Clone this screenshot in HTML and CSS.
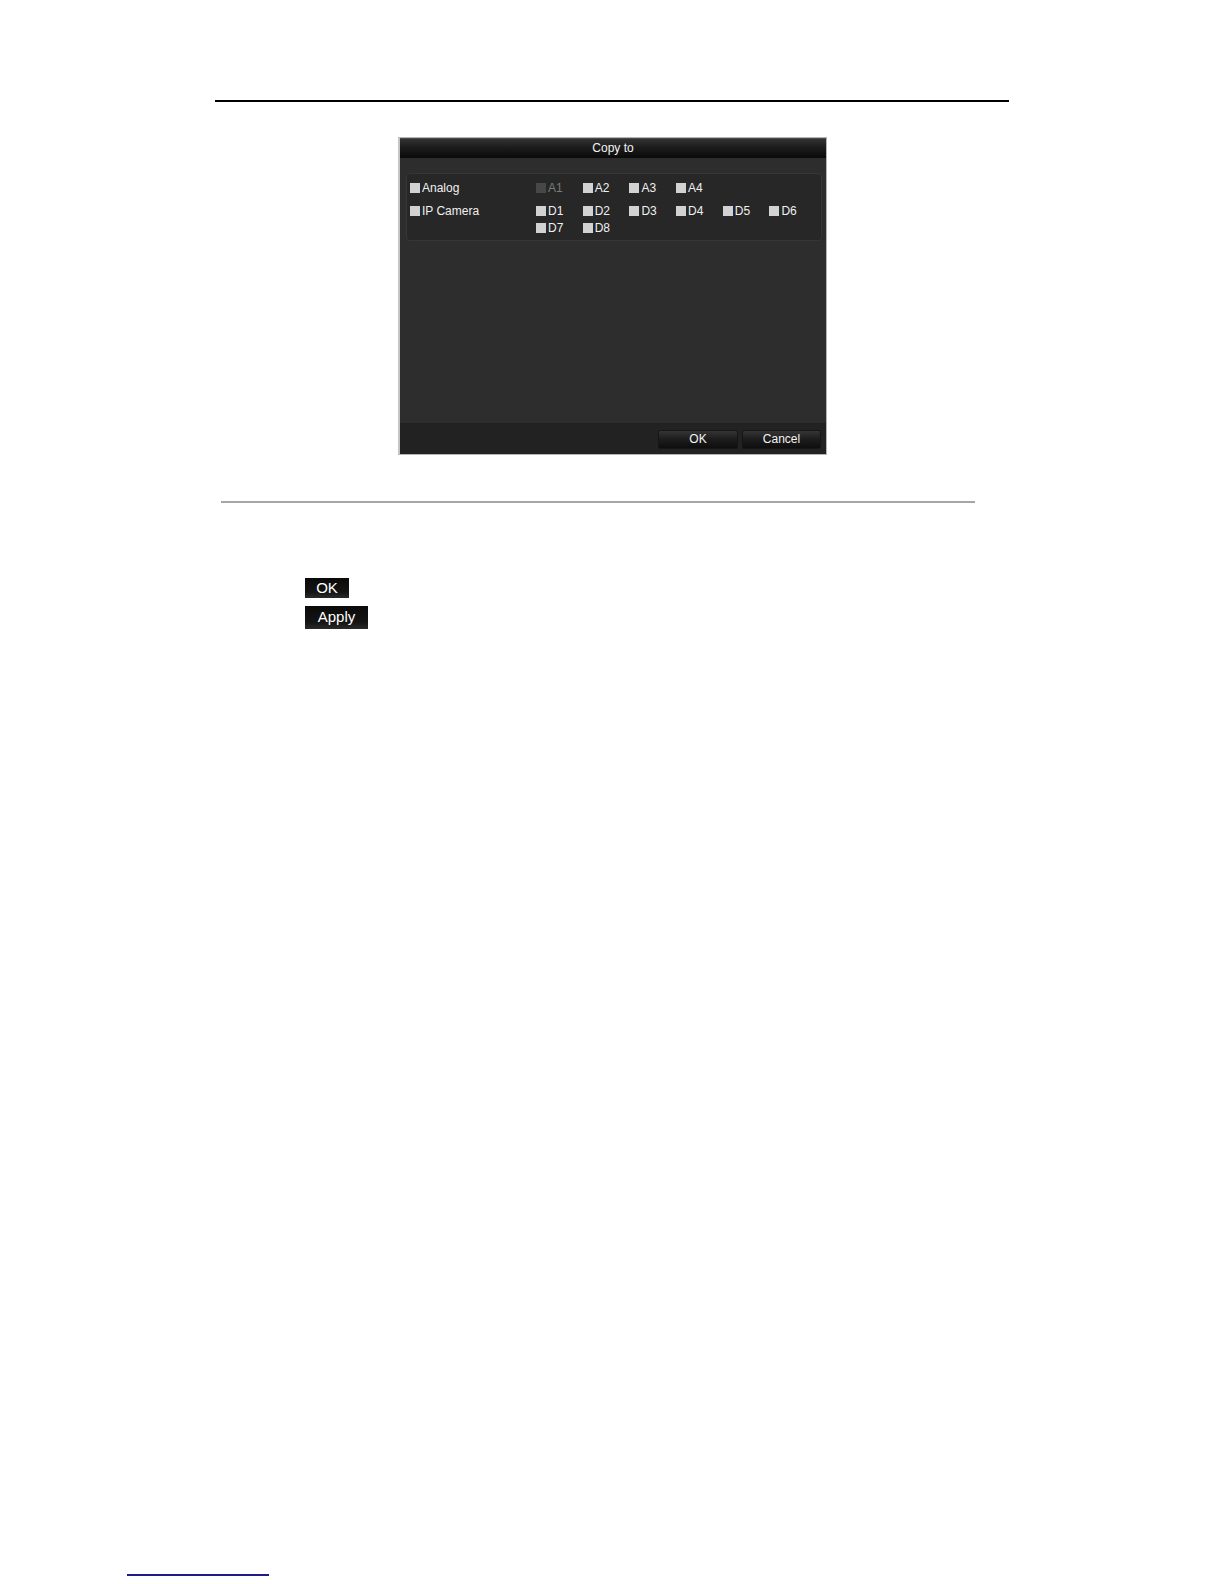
FILE: index.html
```html
<!DOCTYPE html>
<html>
<head>
<meta charset="utf-8">
<title>Copy to</title>
<link rel="stylesheet" href="styles.css">
</head>
<body>
<div class="page">
  <div class="top-rule"></div>

  <div class="dialog">
    <div class="dlg-title">Copy to</div>
    <div class="dlg-body">
      <div class="panel">
        <div class="prow first">
          <label class="cb main"><span class="box"></span>Analog</label>
          <div class="items">
            <label class="cb disabled"><span class="box"></span>A1</label>
            <label class="cb"><span class="box"></span>A2</label>
            <label class="cb"><span class="box"></span>A3</label>
            <label class="cb"><span class="box"></span>A4</label>
          </div>
        </div>
        <div class="prow">
          <label class="cb main"><span class="box"></span>IP Camera</label>
          <div class="items">
            <label class="cb"><span class="box"></span>D1</label>
            <label class="cb"><span class="box"></span>D2</label>
            <label class="cb"><span class="box"></span>D3</label>
            <label class="cb"><span class="box"></span>D4</label>
            <label class="cb"><span class="box"></span>D5</label>
            <label class="cb"><span class="box"></span>D6</label>
            <label class="cb"><span class="box"></span>D7</label>
            <label class="cb"><span class="box"></span>D8</label>
          </div>
        </div>
      </div>
    </div>
    <div class="dlg-footer">
      <button class="dbtn">OK</button>
      <button class="dbtn">Cancel</button>
    </div>
  </div>

  <div class="mid-rule"></div>

  <div class="legend">
    <div class="chip ok">OK</div>
    <div class="chip apply">Apply</div>
  </div>

  <div class="foot-link"></div>
</div>
</body>
</html>
```

FILE: styles.css
```css
html, body {
  margin: 0;
  padding: 0;
  background: #ffffff;
  overflow: hidden;
}

body {
  font-family: "Liberation Sans", Arial, sans-serif;
}

.page {
  width: 1224px;
  display: flex;
  flex-direction: column;
}

.top-rule {
  margin: 100px 0 0 215px;
  width: 794px;
  height: 2px;
  background: #000;
}

.dialog {
  margin: 35px 0 0 398px;
  width: 426px;
  height: 316px;
  border: 1px solid #b4b4b4;
  border-left: 2px solid #c4c4c4;
  background: #2c2c2c;
  display: flex;
  flex-direction: column;
}

.dlg-title {
  height: 19px;
  line-height: 19px;
  text-align: center;
  color: #f4f4f4;
  font-size: 12px;
  background: linear-gradient(#323232 0%, #1c1c1c 45%, #0a0a0a 100%);
  border-top: 1px solid #4a4a4a;
}

.dlg-body {
  flex: 1;
  padding: 15px 4px 0 6px;
  background: #2d2d2d;
}

.panel {
  height: 68px;
  box-sizing: border-box;
  background: #272727;
  border: 1px solid #363636;
  border-radius: 4px;
  padding: 7px 0 0 3px;
}

.prow {
  display: flex;
  align-items: flex-start;
}

.prow.first {
  margin-bottom: 9px;
}

.cb {
  display: flex;
  align-items: center;
  height: 14px;
  font-size: 12px;
  color: #f0f0f0;
  white-space: nowrap;
}

.cb .box {
  width: 10px;
  height: 10px;
  background: #d2d2d2;
  margin-right: 2px;
  flex: none;
}

.cb.main {
  width: 126px;
  flex: none;
}

.cb.disabled {
  color: #7a7a7a;
}

.cb.disabled .box {
  background: #474747;
}

.items {
  display: grid;
  grid-template-columns: repeat(6, 46.7px);
  row-gap: 3px;
}

.dlg-footer {
  height: 31px;
  background: #222222;
  display: flex;
  justify-content: flex-end;
  align-items: center;
  gap: 4px;
  padding-right: 5px;
}

.dbtn {
  height: 19px;
  padding: 0;
  border: 1px solid #161616;
  border-radius: 2px;
  background: linear-gradient(#353535 0%, #1c1c1c 50%, #0e0e0e 100%);
  color: #f4f4f4;
  font-family: "Liberation Sans", Arial, sans-serif;
  font-size: 12px;
  line-height: 17px;
  margin-top: 2px;
}

.dbtn:first-child {
  width: 80px;
}

.dbtn:last-child {
  width: 79px;
}

.mid-rule {
  margin: 46px 0 0 221px;
  width: 754px;
  height: 2px;
  background: #a6a6a2;
}

.legend {
  margin: 75px 0 0 305px;
  display: flex;
  flex-direction: column;
  align-items: flex-start;
  gap: 8px;
}

.chip {
  background: linear-gradient(#0a0a0a 0%, #141414 70%, #2a2a2a 100%);
  color: #ffffff;
  font-size: 15px;
  text-align: center;
}

.chip.ok {
  width: 44px;
  height: 20px;
  line-height: 20px;
}

.chip.apply {
  width: 63px;
  height: 23px;
  line-height: 22px;
}

.foot-link {
  margin: 945px 0 0 127px;
  width: 142px;
  height: 0;
  border-bottom: 2px solid #1b1b8a;
}
```
